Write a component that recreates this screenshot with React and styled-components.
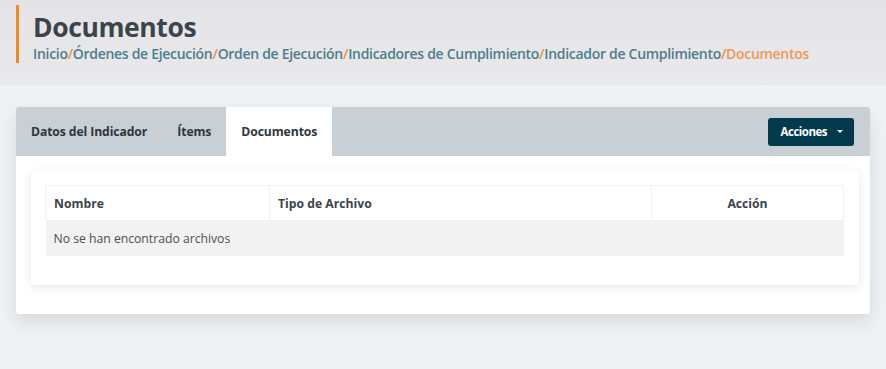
import React from 'react';
import styled, { createGlobalStyle } from 'styled-components';

const GlobalStyle = createGlobalStyle`
    body {
        margin: 0;
        background: #eef2f5;
        font-family: 'Open Sans', 'Liberation Sans', sans-serif;
        color: #3d444b;
    }
`;

const crumbs = [
    'Inicio',
    'Órdenes de Ejecución',
    'Orden de Ejecución',
    'Indicadores de Cumplimiento',
    'Indicador de Cumplimiento',
];

const tabs = ['Datos del Indicador', 'Ítems', 'Documentos'];

const columns = [
    { label: 'Nombre', width: '224px', align: 'left' },
    { label: 'Tipo de Archivo', width: '382px', align: 'left' },
    { label: 'Acción', width: 'auto', align: 'center' },
];

export default function App() {
    const active = 'Documentos';
    return (
        <>
            <GlobalStyle />
            <PageHeader>
                <TitleBlock>
                    <Title>Documentos</Title>
                    <Breadcrumb>
                        {crumbs.map(c => (
                            <React.Fragment key={c}>
                                <CrumbLink>{c}</CrumbLink>
                                <Slash>/</Slash>
                            </React.Fragment>
                        ))}
                        <CrumbCurrent>Documentos</CrumbCurrent>
                    </Breadcrumb>
                </TitleBlock>
            </PageHeader>
            <Content>
                <Card>
                    <TabBar>
                        <Tabs>
                            {tabs.map(t => (
                                <Tab key={t} $active={t === active}>
                                    {t}
                                </Tab>
                            ))}
                        </Tabs>
                        <ActionButton>
                            Acciones
                            <Caret />
                        </ActionButton>
                    </TabBar>
                    <CardBody>
                        <InnerCard>
                            <Table>
                                <colgroup>
                                    {columns.map(c => (
                                        <col key={c.label} style={{ width: c.width }} />
                                    ))}
                                </colgroup>
                                <thead>
                                    <tr>
                                        {columns.map(c => (
                                            <Th key={c.label} $align={c.align}>
                                                {c.label}
                                            </Th>
                                        ))}
                                    </tr>
                                </thead>
                                <tbody>
                                    <tr>
                                        <EmptyCell colSpan={3}>No se han encontrado archivos</EmptyCell>
                                    </tr>
                                </tbody>
                            </Table>
                        </InnerCard>
                    </CardBody>
                </Card>
            </Content>
        </>
    );
}

const PageHeader = styled.header`
    height: 85px;
    background: linear-gradient(#e4e4e6, #e9e9eb);
    padding: 5px 16px 0;
    box-sizing: border-box;
`;

const TitleBlock = styled.div`
    border-left: 3px solid #f28a1e;
    padding-left: 14px;
    height: 58px;
    box-sizing: border-box;
`;

const Title = styled.h1`
    margin: 0;
    padding-top: 3px;
    font-size: 26.5px;
    font-weight: 700;
    letter-spacing: -0.4px;
    line-height: 38px;
    color: #3b434b;
`;

const Breadcrumb = styled.div`
    font-size: 14px;
    font-weight: 600;
    line-height: 16px;
    letter-spacing: -0.3px;
`;

const CrumbLink = styled.span`
    color: #4c7d8b;
`;

const Slash = styled.span`
    color: #f0913a;
`;

const CrumbCurrent = styled.span`
    color: #ee9a55;
`;

const Content = styled.main`
    padding: 22px 16px 40px;
`;

const Card = styled.section`
    background: #fff;
    border-radius: 3px;
    box-shadow: 0 8px 18px rgba(0, 0, 0, 0.1);
    overflow: hidden;
`;

const TabBar = styled.div`
    display: flex;
    align-items: center;
    justify-content: space-between;
    height: 49px;
    background: #c8d0d6;
    padding-right: 16px;
`;

const Tabs = styled.nav`
    display: flex;
    align-self: stretch;
`;

const Tab = styled.div`
    display: flex;
    align-items: center;
    padding: 0 15px;
    font-size: 12.2px;
    font-weight: 700;
    letter-spacing: -0.1px;
    color: #2f353b;
    background: ${p => (p.$active ? '#fff' : 'transparent')};
`;

const ActionButton = styled.button`
    display: flex;
    align-items: center;
    gap: 10px;
    height: 28px;
    padding: 0 11px 0 13px;
    border: none;
    border-radius: 3px;
    background: #013a4c;
    color: #fff;
    font-family: inherit;
    font-size: 11.5px;
    font-weight: 700;
    letter-spacing: -0.5px;
`;

const Caret = styled.span`
    width: 0;
    height: 0;
    border-left: 3px solid transparent;
    border-right: 3px solid transparent;
    border-top: 3px solid #fff;
`;

const CardBody = styled.div`
    padding: 15px 11px 29px 15px;
`;

const InnerCard = styled.div`
    background: #fff;
    border-radius: 3px;
    box-shadow: 0 2px 10px rgba(0, 0, 0, 0.1);
    padding: 14px 15px 29px 14px;
`;

const Table = styled.table`
    width: 100%;
    border-collapse: collapse;
    table-layout: fixed;
`;

const Th = styled.th`
    height: 35px;
    padding: 0 8px;
    box-sizing: border-box;
    border: 1px solid #f0f0f0;
    text-align: ${p => p.$align};
    font-size: 12.2px;
    font-weight: 700;
    color: #3b434b;
`;

const EmptyCell = styled.td`
    height: 35px;
    padding: 0 8px;
    background: #f2f2f2;
    font-size: 12.2px;
    color: #4a4f55;
`;
